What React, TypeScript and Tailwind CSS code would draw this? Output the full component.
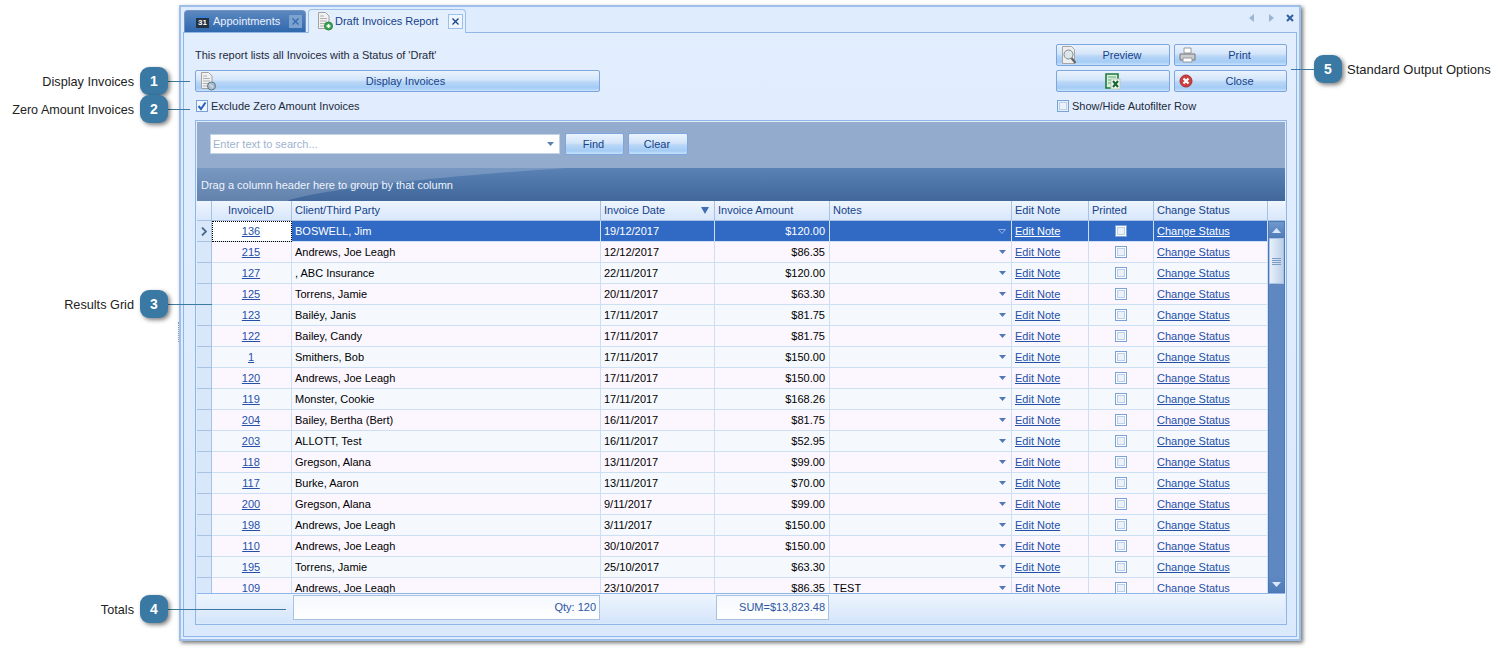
import type { ReactNode } from "react";

const F = "font-['Liberation_Sans',sans-serif]";
const rows: [string, string, string, string, string?][] = [
  ["136", "BOSWELL, Jim", "19/12/2017", "$120.00"],
  ["215", "Andrews, Joe Leagh", "12/12/2017", "$86.35"],
  ["127", ", ABC Insurance", "22/11/2017", "$120.00"],
  ["125", "Torrens, Jamie", "20/11/2017", "$63.30"],
  ["123", "Bailéy, Janis", "17/11/2017", "$81.75"],
  ["122", "Bailey, Candy", "17/11/2017", "$81.75"],
  ["1", "Smithers, Bob", "17/11/2017", "$150.00"],
  ["120", "Andrews, Joe Leagh", "17/11/2017", "$150.00"],
  ["119", "Monster, Cookie", "17/11/2017", "$168.26"],
  ["204", "Bailey, Bertha (Bert)", "16/11/2017", "$81.75"],
  ["203", "ALLOTT, Test", "16/11/2017", "$52.95"],
  ["118", "Gregson, Alana", "13/11/2017", "$99.00"],
  ["117", "Burke, Aaron", "13/11/2017", "$70.00"],
  ["200", "Gregson, Alana", "9/11/2017", "$99.00"],
  ["198", "Andrews, Joe Leagh", "3/11/2017", "$150.00"],
  ["110", "Andrews, Joe Leagh", "30/10/2017", "$150.00"],
  ["195", "Torrens, Jamie", "25/10/2017", "$63.30"],
  ["109", "Andrews, Joe Leagh", "23/10/2017", "$86.35", "TEST"],
];
const COLS = "grid grid-cols-[15px_80px_309px_114px_115px_182px_77px_65px_114px]";

function Callout({ n, badge, line, label, labelClass }: { n: number; badge: string; line: string; label: string; labelClass: string }) {
  return (
    <>
      <div className={`absolute h-px bg-[#3d7aa3] ${line}`} />
      <div className={`absolute w-[28px] h-[28px] rounded-[9px] bg-[#3a79a4] text-white font-bold text-[14px] flex items-center justify-center shadow-[2px_2px_4px_rgba(0,0,0,0.5)] ${badge}`}>{n}</div>
      <div className={`absolute leading-[16px] text-[#222] whitespace-nowrap ${labelClass}`}>{label}</div>
    </>
  );
}

function DocIcon({ plus }: { plus?: boolean }) {
  return (
    <svg width="16" height="19" viewBox="0 0 16 19" className="shrink-0">
      <path d="M1.500 .5h7l3.500 3.500v12.500h-10.500z" fill="#f1f1f1" stroke="#a2a2a2" />
      <path d="M3 4h4M3 6.500h7M3 9h7M3 11.500h5M3 14h4" stroke="#b0b0b0" />
      <circle cx="11.500" cy="14" r="4" fill={plus ? "#3aa655" : "#a9bdca"} stroke={plus ? "#2a8040" : "#5d7688"} />
      {plus ? <path d="M9.500 14h4M11.500 12v4" stroke="#fff" strokeWidth="1.500" /> : <path d="M10 12.500l3 3" stroke="#fff" />}
    </svg>
  );
}

function Btn({ children, className, icon }: { children?: ReactNode; className: string; icon?: ReactNode }) {
  return (
    <div className={`relative h-[22px] rounded-[2px] border border-[#7da6de] bg-[linear-gradient(#eaf3fd_0%,#d3e5fa_45%,#b9d6f6_55%,#a4ccf5_85%,#c9e2fb_100%)] flex items-center justify-center text-[11px] text-[#15428b] ${className}`}>
      {icon && <span className="absolute left-[4px] top-[1px]">{icon}</span>}
      {children}
    </div>
  );
}

function Check({ on, tone }: { on?: boolean; tone?: string }) {
  return (
    <span className={`w-[12px] h-[12px] border border-[#7ba2d6] flex items-center justify-center shrink-0 ${tone ?? "bg-white"}`}>
      {on ? (
        <svg width="10" height="10" viewBox="0 0 10 10"><path d="M1.500 5l2.500 3 4.500-6.500" fill="none" stroke="#2c62b8" strokeWidth="2" /></svg>
      ) : (
        <span className="w-[8px] h-[8px] border border-[#bdd0ea] bg-[#eaf1fb]" />
      )}
    </span>
  );
}

function Caret({ c }: { c: string }) {
  return <svg width="7" height="4" viewBox="0 0 7 4"><path d="M0 0h7l-3.500 4z" fill={c} /></svg>;
}

const HEAD = ["", "InvoiceID", "Client/Third Party", "Invoice Date", "Invoice Amount", "Notes", "Edit Note", "Printed", "Change Status"];

export default function App() {
  return (
    <div className={`relative w-[1507px] h-[650px] bg-white overflow-hidden pt-[5px] pl-[179px] ${F}`}>
      <div className="relative w-[1122px] h-[636px] bg-[#dfecfd] border-2 border-[#9cc0ea] shadow-[2px_2px_4px_rgba(0,0,0,0.55)] pt-px">
        <div className="absolute -left-[3px] top-[315px] h-[20px] border-l border-dotted border-[#8a9bb0]" />
        {/* tab strip */}
        <div className="flex items-end h-[24px] pl-[3px] gap-[2px] text-[11px] relative">
          <div className="h-[22px] w-[122px] rounded-t-[4px] border border-[#6f93c4] border-b-0 bg-[linear-gradient(#5c88bf,#2f68ae)] flex items-center pl-[11px] text-[#e8f1fd]">
            <span className="relative w-[13px] h-[12px] bg-[#26313f] text-white text-[8px] font-bold leading-[10px] text-center mr-[4px] border-t-2 border-[#3f7fd0]">31</span>
            <span>Appointments</span>
            <span className="ml-auto mr-[3px] w-[13px] h-[13px] bg-[#7ea2cf] flex items-center justify-center">
              <svg width="7" height="7" viewBox="0 0 7 7"><path d="M.5.5l6 6M6.500.5l-6 6" stroke="#2f68ae" strokeWidth="1.300" /></svg>
            </span>
          </div>
          <div className="h-[24px] w-[158px] rounded-t-[4px] border border-[#9cc0ea] border-b-0 bg-[#e4effd] flex items-center pl-[8px] text-[#15428b] z-10 -mb-px">
            <DocIcon plus />
            <span className="ml-[2px]">Draft Invoices Report</span>
            <span className="ml-auto mr-[2px] w-[15px] h-[15px] border border-[#9cc0ea] bg-[#eef5fe] flex items-center justify-center">
              <svg width="7" height="7" viewBox="0 0 7 7"><path d="M.5.5l6 6M6.500.5l-6 6" stroke="#15428b" strokeWidth="1.300" /></svg>
            </span>
          </div>
          <div className="ml-auto mr-[5px] self-center flex items-center gap-[15px] -mt-[5px]">
            <svg width="5" height="8" viewBox="0 0 5 8"><path d="M5 0v8L0 4z" fill="#9db5d4" /></svg>
            <svg width="5" height="8" viewBox="0 0 5 8"><path d="M0 0v8l5-4z" fill="#9db5d4" /></svg>
            <svg width="8" height="8" viewBox="0 0 8 8" className="-ml-[3px]"><path d="M1 1l6 6M7 1L1 7" stroke="#2f5f9d" strokeWidth="2" /></svg>
          </div>
        </div>

        {/* content panel */}
        <div className="mx-[2px] h-[605px] border border-[#8eb6e8] bg-[linear-gradient(#e2eefe,#dbe9fc)] pt-[11px] pl-[11px] pr-[9px] flex flex-col">
          <div className="flex justify-between h-[48px]">
            <div className="w-[405px]">
              <div className="h-[22px] pt-[4px] text-[11px] leading-[14px] text-[#1c2a3c]">This report lists all Invoices with a Status of 'Draft'</div>
              <Btn className="w-[405px] mt-[4px] pl-[16px]" icon={<DocIcon />}>Display Invoices</Btn>
            </div>
            <div className="grid grid-cols-[114px_113px] gap-x-[4px] gap-y-[4px] w-[231px] content-start">
              <Btn className="pl-[18px]" icon={<svg width="17" height="19" viewBox="0 0 17 19"><path d="M1.500 .5h9l3 3v14h-12z" fill="#eee" stroke="#a5a5a5" /><circle cx="7.500" cy="8.500" r="4.500" fill="#dfe6ea" stroke="#7f8b93" /><path d="M10.500 12l4 5" stroke="#666" strokeWidth="2.200" /></svg>}>Preview</Btn>
              <Btn className="pl-[18px]" icon={<svg width="17" height="18" viewBox="0 0 17 18"><path d="M5 2h7v5H5z" fill="#fff" stroke="#999" /><path d="M1 8h15v6H1z" fill="#c9ccd0" stroke="#777" /><path d="M4 12h9v4H4z" fill="#fff" stroke="#999" /></svg>}>Print</Btn>
              <Btn className=""><svg width="16" height="17" viewBox="0 0 16 17"><path d="M1 1h12v14H1z" fill="#d9efdc" stroke="#1f7a3d" strokeWidth="1.600" /><path d="M3 4h8M3 7h3M3 10h3" stroke="#5fae74" /><path d="M6 6h9v10H6z" fill="#f3f8f3" stroke="#b8c9ba" /><path d="M8 8l5 6M13 8l-5 6" stroke="#13662f" strokeWidth="2" /></svg></Btn>
              <Btn className="pl-[18px]" icon={<svg width="15" height="15" viewBox="0 0 15 15" className="mt-[2px]"><circle cx="7" cy="7" r="6" fill="#cf3f3f" stroke="#a72e2e" /><path d="M4.500 4.500l5 5M9.500 4.500l-5 5" stroke="#fff" strokeWidth="2.200" /></svg>}>Close</Btn>
            </div>
          </div>

          <div className="flex justify-between h-[22px] items-center text-[11px] text-[#1c2a3c] mt-[3px]">
            <label className="flex items-center gap-[3px] pl-px"><Check on tone="bg-[#f2f7fd]" />Exclude Zero Amount Invoices</label>
            <label className="flex items-center gap-[3px] w-[230px]"><Check tone="bg-[#e6eefa]" />Show/Hide Autofilter Row</label>
          </div>

          {/* grid frame */}
          <div className="mt-[3px] w-[1092px] h-[505px] border border-[#8eb6e8] p-px flex flex-col">
            <div className="h-[46px] bg-[#93abcd] flex items-center pl-[13px] gap-[4px] pb-[2px] shrink-0">
              <div className="w-[350px] h-[20px] bg-white border border-[#c2d3e8] flex items-center pl-[2px] pr-[5px] text-[11px] text-[#9db3cf] justify-between">
                <span>Enter text to search...</span><Caret c="#5c7faf" />
              </div>
              <Btn className="w-[59px] ml-px pr-[2px]">Find</Btn>
              <Btn className="w-[60px] pr-[2px]">Clear</Btn>
            </div>
            <div className="relative h-[33px] shrink-0 bg-[linear-gradient(#5a82b5,#41679b)] flex items-end pb-[9px] pl-[4px] text-[11px] leading-[14px] text-[#eef4fd]">
              <svg className="absolute inset-0" width="1088" height="33" viewBox="0 0 1088 33"><path d="M0 0H370C250 8 130 20 90 33H0z" fill="#ffffff" opacity="0.18" /></svg>
              <span className="relative">Drag a column header here to group by that column</span>
            </div>

            <div className="relative flex-1 flex flex-col min-h-0 bg-white">
              <div className={`${COLS} h-[20px] border-b border-[#a9c2e3] rounded-tr-[4px] bg-[linear-gradient(#eef5fe,#d8e7fa)] text-[11px] text-[#15428b] pr-[17px] shrink-0`}>
                {HEAD.map((h, i) => (
                  <div key={i} className={`border-r border-[#a9c2e3] flex items-center pl-[3px] pr-[4px] ${i === 1 ? "justify-center" : ""} ${i === 3 ? "justify-between pr-[5px]" : ""}`}>
                    {h}
                    {i === 3 && <svg width="8" height="7" viewBox="0 0 8 7"><path d="M0 0h8L4 7z" fill="#3f6fb0" /></svg>}
                  </div>
                ))}
              </div>
              <div className="flex h-[372px] shrink-0 overflow-hidden">
                <div className="w-[1071px] overflow-hidden h-[372px]">
                  {rows.map((r, i) => {
                    const sel = i === 0;
                    const bg = sel ? "bg-[#316ac5] text-white" : i % 2 ? "bg-[#fcf6fe] text-black" : "bg-[#f5f9fe] text-black";
                    const link = sel ? "text-white underline" : "text-[#2450a8] underline";
                    const cell = "border-r border-b border-[#cddff3] flex items-center pl-[3px] pr-[4px] overflow-hidden";
                    return (
                      <div key={i} className={`${COLS} h-[21px] text-[11px] leading-[14px] ${bg}`}>
                        <div className="border-r border-b border-[#a9c2e3] bg-[#d9e7fa] flex items-center justify-center">
                          {sel && <svg width="6" height="9" viewBox="0 0 6 9"><path d="M1 .5l4 4-4 4" fill="none" stroke="#4a6a90" strokeWidth="1.800" /></svg>}
                        </div>
                        <div className={`${cell} justify-center ${sel ? "bg-white outline-1 -outline-offset-1 outline-dotted outline-black" : ""}`}>
                          <span className="underline text-[#2450a8]">{r[0]}</span>
                        </div>
                        <div className={cell}>{r[1]}</div>
                        <div className={cell}>{r[2]}</div>
                        <div className={`${cell} justify-end`}>{r[3]}</div>
                        <div className={`${cell} justify-between pr-[5px]`}>
                          <span>{r[4] ?? ""}</span>
                          {sel ? <svg width="8" height="5" viewBox="0 0 8 5"><path d="M.5.5h7L4 4.500z" fill="none" stroke="#8fb0e0" /></svg> : <Caret c="#4f78b5" />}
                        </div>
                        <div className={cell}><span className={link}>Edit Note</span></div>
                        <div className={`${cell} justify-center`}><Check /></div>
                        <div className={cell}><span className={link}>Change Status</span></div>
                      </div>
                    );
                  })}
                </div>
                <div className="w-[17px] h-[372px] bg-[#5f88c2] border border-[#4d78b3] flex flex-col shrink-0">
                  <div className="h-[16px] bg-[linear-gradient(#6f98cc,#4f7cb8)] flex items-center justify-center">
                    <svg width="9" height="5" viewBox="0 0 9 5"><path d="M0 5h9L4.500 0z" fill="#dbe8f8" /></svg>
                  </div>
                  <div className="h-[46px] bg-[linear-gradient(90deg,#e8f0fb,#bdd0e8)] border border-[#a9c2e3] flex flex-col items-center justify-center gap-[1px]">
                    <span className="w-[9px] h-px bg-[#7d9cc4]" /><span className="w-[9px] h-px bg-[#7d9cc4]" /><span className="w-[9px] h-px bg-[#7d9cc4]" /><span className="w-[9px] h-px bg-[#7d9cc4]" />
                  </div>
                  <div className="flex-1" />
                  <div className="h-[16px] bg-[linear-gradient(#5f88c2,#4f7cb8)] flex items-center justify-center">
                    <svg width="9" height="5" viewBox="0 0 9 5"><path d="M0 0h9L4.500 5z" fill="#dbe8f8" /></svg>
                  </div>
                </div>
              </div>
              {/* footer */}
              <div className={`${COLS} h-[30px] shrink-0 border-t border-[#8eb6e8] bg-[linear-gradient(#eef5fe,#d4e5fa)] text-[11px] text-[#2c55a3]`}>
                <div /><div />
                <div className="mt-[1px] mb-[3px] mx-px border border-[#a9c2e3] bg-[linear-gradient(#f4f8fd,#ffffff)] flex items-center justify-end pr-[3px]">Qty: 120</div>
                <div />
                <div className="mt-[1px] mb-[3px] mx-px border border-[#a9c2e3] bg-[linear-gradient(#f4f8fd,#ffffff)] flex items-center justify-end pr-[3px]">SUM=$13,823.48</div>
              </div>
            </div>
          </div>
        </div>
      </div>

      <Callout n={1} badge="left-[140px] top-[67px]" line="left-[166px] w-[24px] top-[81px]" label="Display Invoices" labelClass="text-[12.7px] right-[1373px] top-[74px]" />
      <Callout n={2} badge="left-[140px] top-[95px]" line="left-[166px] w-[24px] top-[109px]" label="Zero Amount Invoices" labelClass="text-[12.6px] right-[1373px] top-[102px]" />
      <Callout n={3} badge="left-[140px] top-[290px]" line="left-[166px] w-[46px] top-[304px]" label="Results Grid" labelClass="text-[12.7px] right-[1373px] top-[297px]" />
      <Callout n={4} badge="left-[140px] top-[595px]" line="left-[166px] w-[120px] top-[609px]" label="Totals" labelClass="text-[12.7px] right-[1373px] top-[602px]" />
      <Callout n={5} badge="left-[1314px] top-[55px]" line="left-[1291px] w-[24px] top-[69px]" label="Standard Output Options" labelClass="text-[13px] left-[1347px] top-[62px]" />
    </div>
  );
}
